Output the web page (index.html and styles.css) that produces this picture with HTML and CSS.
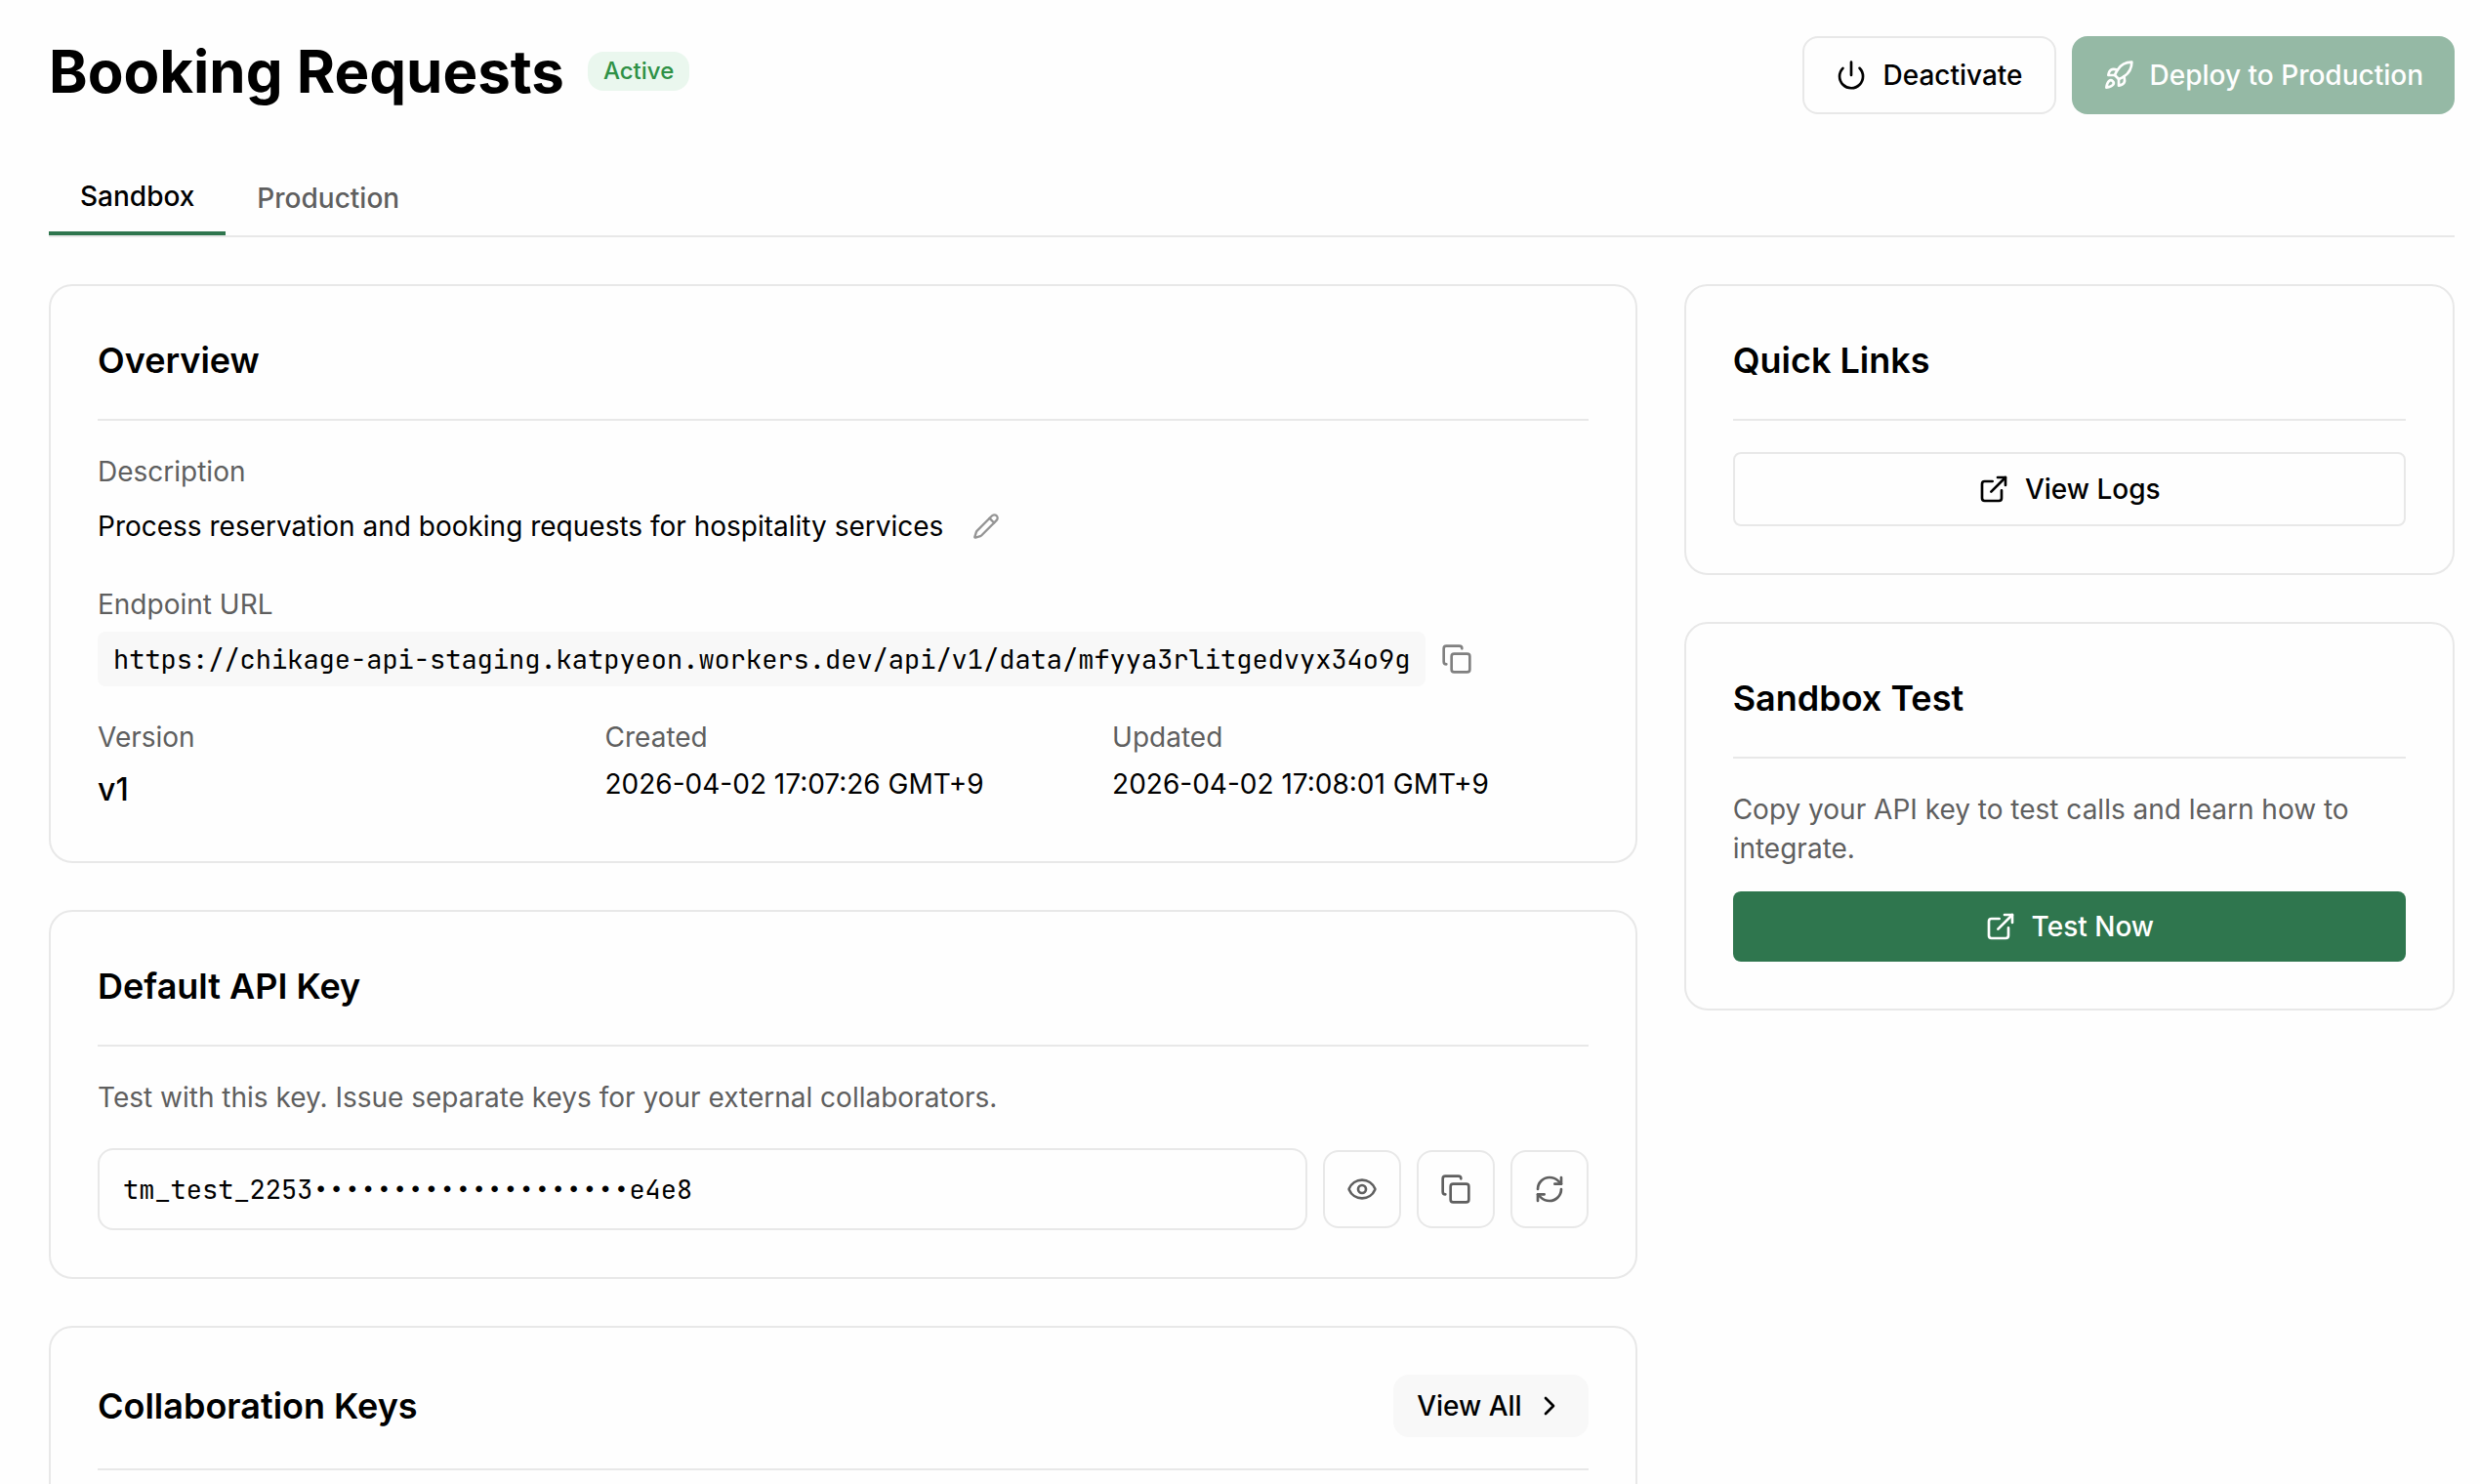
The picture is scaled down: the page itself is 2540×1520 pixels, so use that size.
FILE: index.html
```
<!DOCTYPE html>
<html lang="en">
<head>
    <meta charset="UTF-8">
    <meta name="viewport" content="width=device-width, initial-scale=1.0">
    <title>Booking Requests</title>
    <link rel="stylesheet" href="styles.css">
</head>
<body>
    <div class="page">
        <header class="page-header">
            <div class="page-title">
                <h1>Booking Requests</h1>
                <span class="badge">Active</span>
            </div>
            <div class="header-actions">
                <button type="button" class="btn btn-outline">
                    <svg class="icon" viewBox="0 0 24 24"><path d="M12 2v10"/><path d="M18.4 6.6a9 9 0 1 1-12.77.04"/></svg>
                    Deactivate
                </button>
                <button type="button" class="btn btn-primary" disabled>
                    <svg class="icon" viewBox="0 0 24 24"><path d="M4.5 16.5c-1.5 1.26-2 5-2 5s3.74-.5 5-2c.71-.84.7-2.13-.09-2.91a2.18 2.18 0 0 0-2.91-.09z"/><path d="m12 15-3-3a22 22 0 0 1 2-3.95A12.88 12.88 0 0 1 22 2c0 2.72-.78 7.5-6 11a22.35 22.35 0 0 1-4 2z"/><path d="M9 12H4s.55-3.03 2-4c1.62-1.08 5 0 5 0"/><path d="M12 15v5s3.03-.55 4-2c1.08-1.62 0-5 0-5"/></svg>
                    Deploy to Production
                </button>
            </div>
        </header>

        <nav class="tabs">
            <button type="button" class="tab active">Sandbox</button>
            <button type="button" class="tab">Production</button>
        </nav>

        <div class="content">
            <main class="main-column">
                <!-- Overview -->
                <section class="card">
                    <div class="card-header">
                        <h2>Overview</h2>
                    </div>
                    <div class="overview">
                        <div class="field">
                            <p class="label">Description</p>
                            <div class="field-row">
                                <p class="value">Process reservation and booking requests for hospitality services</p>
                                <button type="button" class="edit-btn" aria-label="Edit description">
                                    <svg class="icon icon-small" viewBox="0 0 24 24"><path d="M21.174 6.812a1 1 0 0 0-3.986-3.987L3.842 16.174a2 2 0 0 0-.5.83l-1.321 4.352a.5.5 0 0 0 .623.622l4.353-1.32a2 2 0 0 0 .83-.497z"/><path d="m15 5 4 4"/></svg>
                                </button>
                            </div>
                        </div>
                        <div class="field">
                            <p class="label">Endpoint URL</p>
                            <div class="field-row">
                                <code class="endpoint">https://chikage-api-staging.katpyeon.workers.dev/api/v1/data/mfyya3rlitgedvyx34o9g</code>
                                <button type="button" class="copy-btn" aria-label="Copy endpoint URL">
                                    <svg class="icon" viewBox="0 0 24 24"><rect x="8" y="8" width="14" height="14" rx="2"/><path d="M4 16c-1.1 0-2-.9-2-2V4c0-1.1.9-2 2-2h10c1.1 0 2 .9 2 2"/></svg>
                                </button>
                            </div>
                        </div>
                        <div class="meta-grid">
                            <div class="field">
                                <p class="label">Version</p>
                                <p class="version">v1</p>
                            </div>
                            <div class="field">
                                <p class="label">Created</p>
                                <p class="value">2026-04-02 17:07:26 GMT+9</p>
                            </div>
                            <div class="field">
                                <p class="label">Updated</p>
                                <p class="value">2026-04-02 17:08:01 GMT+9</p>
                            </div>
                        </div>
                    </div>
                </section>

                <!-- Default API key -->
                <section class="card">
                    <div class="card-header">
                        <h2 id="apiKeyTitle">Default API Key</h2>
                    </div>
                    <p class="label">Test with this key. Issue separate keys for your external collaborators.</p>
                    <div class="key-row">
                        <input type="text" class="key-input" value="tm_test_2253••••••••••••••••••••e4e8" aria-labelledby="apiKeyTitle" readonly>
                        <button type="button" class="icon-btn" aria-label="Show key">
                            <svg class="icon" viewBox="0 0 24 24"><path d="M2.062 12.348a1 1 0 0 1 0-.696 10.75 10.75 0 0 1 19.876 0 1 1 0 0 1 0 .696 10.75 10.75 0 0 1-19.876 0"/><circle cx="12" cy="12" r="3"/></svg>
                        </button>
                        <button type="button" class="icon-btn" aria-label="Copy key">
                            <svg class="icon" viewBox="0 0 24 24"><rect x="8" y="8" width="14" height="14" rx="2"/><path d="M4 16c-1.1 0-2-.9-2-2V4c0-1.1.9-2 2-2h10c1.1 0 2 .9 2 2"/></svg>
                        </button>
                        <button type="button" class="icon-btn" aria-label="Regenerate key">
                            <svg class="icon" viewBox="0 0 24 24"><path d="M3 12a9 9 0 0 1 9-9 9.75 9.75 0 0 1 6.74 2.74L21 8"/><path d="M21 3v5h-5"/><path d="M21 12a9 9 0 0 1-9 9 9.75 9.75 0 0 1-6.74-2.74L3 16"/><path d="M8 16H3v5"/></svg>
                        </button>
                    </div>
                </section>

                <!-- Collaboration keys -->
                <section class="card">
                    <div class="card-header">
                        <h2>Collaboration Keys</h2>
                        <a href="#" class="view-all">
                            View All
                            <svg class="icon" viewBox="0 0 24 24"><path d="m9 18 6-6-6-6"/></svg>
                        </a>
                    </div>
                    <div class="key-list"></div>
                </section>
            </main>

            <aside class="side-column">
                <section class="card">
                    <div class="card-header">
                        <h2>Quick Links</h2>
                    </div>
                    <a href="#" class="link-btn link-btn-outline">
                        <svg class="icon" viewBox="0 0 24 24"><path d="M15 3h6v6"/><path d="M10 14 21 3"/><path d="M18 13v6a2 2 0 0 1-2 2H5a2 2 0 0 1-2-2V8a2 2 0 0 1 2-2h6"/></svg>
                        View Logs
                    </a>
                </section>

                <section class="card">
                    <div class="card-header">
                        <h2>Sandbox Test</h2>
                    </div>
                    <p class="label test-text">Copy your API key to test calls and learn how to integrate.</p>
                    <a href="#" class="link-btn link-btn-primary">
                        <svg class="icon" viewBox="0 0 24 24"><path d="M15 3h6v6"/><path d="M10 14 21 3"/><path d="M18 13v6a2 2 0 0 1-2 2H5a2 2 0 0 1-2-2V8a2 2 0 0 1 2-2h6"/></svg>
                        Test Now
                    </a>
                </section>
            </aside>
        </div>
    </div>
</body>
</html>
```
FILE: styles.css
```
* {
    margin: 0;
    padding: 0;
    box-sizing: border-box;
}

body {
    background-color: #fefefe;
    color: #000000;
    font-family: 'Inter', 'Liberation Sans', sans-serif;
    font-size: 28px;
    line-height: 40px;
}

button, input {
    font: inherit;
    color: inherit;
}

button {
    cursor: pointer;
    background: none;
    border: none;
}

a {
    color: inherit;
    text-decoration: none;
}

.page {
    padding: 37px 26px 48px 50px;
}

.icon {
    width: 32px;
    height: 32px;
    flex-shrink: 0;
    fill: none;
    stroke: currentColor;
    stroke-width: 2;
    stroke-linecap: round;
    stroke-linejoin: round;
}

.icon-small {
    width: 28px;
    height: 28px;
}

/* Header */
.page-header {
    display: flex;
    justify-content: space-between;
    align-items: center;
    margin-bottom: 48px;
}

.page-title {
    display: flex;
    align-items: center;
    gap: 24px;
    height: 72px;
    align-self: flex-start;
}

.page-title h1 {
    font-size: 60px;
    line-height: 72px;
    font-weight: 700;
}

.badge {
    padding: 0 16px;
    border-radius: 16px;
    background-color: #eaf7ee;
    color: #2f9146;
    font-size: 24px;
    font-weight: 500;
}

.header-actions {
    display: flex;
    gap: 16px;
}

.btn {
    display: flex;
    align-items: center;
    gap: 16px;
    height: 80px;
    padding: 0 32px;
    border-radius: 16px;
    font-weight: 500;
}

.btn-outline {
    border: 2px solid #e8e8e8;
}

.btn-primary {
    background-color: #2f764e;
    color: #ffffff;
}

.btn:disabled {
    opacity: 0.5;
    cursor: not-allowed;
}

/* Tabs */
.tabs {
    display: flex;
    border-bottom: 2px solid #e8e8e8;
    margin-bottom: 48px;
}

.tab {
    padding: 16px 32px;
    color: #5f5f5f;
    font-weight: 500;
}

.tab.active {
    color: #000000;
    border-bottom: 4px solid #2f764e;
}

/* Layout */
.content {
    display: grid;
    grid-template-columns: repeat(3, 1fr);
    gap: 48px;
    align-items: start;
}

.main-column {
    grid-column: span 2;
}

.main-column, .side-column {
    display: flex;
    flex-direction: column;
    gap: 48px;
    min-width: 0;
}

.card {
    padding: 48px;
    border: 2px solid #e8e8e8;
    border-radius: 24px;
}

.card-header {
    display: flex;
    justify-content: space-between;
    align-items: center;
    padding-bottom: 32px;
    margin-bottom: 32px;
    border-bottom: 2px solid #e8e8e8;
}

.card-header h2 {
    font-size: 36px;
    line-height: 56px;
    font-weight: 600;
}

.label {
    color: #5f5f5f;
}

/* Overview */
.overview {
    display: flex;
    flex-direction: column;
    gap: 32px;
}

.field {
    display: flex;
    flex-direction: column;
    gap: 8px;
}

.field-row {
    display: flex;
    align-items: center;
    gap: 16px;
}

.edit-btn {
    display: flex;
    padding: 14px;
    color: #949494;
}

.endpoint {
    padding: 8px 16px;
    border-radius: 8px;
    background-color: #f8f8f8;
}

.endpoint, .key-input {
    font-family: 'JetBrains Mono', 'DejaVu Sans Mono', monospace;
    font-size: 27px;
    font-variant-ligatures: none;
}

.copy-btn {
    display: flex;
    color: #808080;
}

.meta-grid {
    display: grid;
    grid-template-columns: repeat(3, 1fr);
    gap: 32px;
}

.version {
    font-size: 32px;
    line-height: 51px;
    font-weight: 500;
}

/* API key */
.key-row {
    display: flex;
    align-items: center;
    gap: 16px;
    margin-top: 32px;
}

.key-input {
    flex: 1;
    min-width: 0;
    height: 84px;
    padding: 0 24px;
    border: 2px solid #e8e8e8;
    border-radius: 16px;
    background: none;
}

.icon-btn {
    display: flex;
    align-items: center;
    justify-content: center;
    width: 80px;
    height: 80px;
    border: 2px solid #e8e8e8;
    border-radius: 16px;
    color: #5f5f5f;
}

.view-all {
    display: flex;
    align-items: center;
    gap: 12px;
    padding: 12px 24px;
    border-radius: 16px;
    background-color: #f8f8f8;
    font-weight: 500;
}

.key-list {
    min-height: 160px;
}

/* Sidebar */
.link-btn {
    display: flex;
    align-items: center;
    justify-content: center;
    gap: 16px;
    padding: 16px;
    border-radius: 8px;
    font-weight: 500;
}

.link-btn-outline {
    border: 2px solid #e8e8e8;
}

.link-btn-primary {
    background-color: #2f764e;
    color: #ffffff;
}

.test-text {
    margin-bottom: 24px;
}
```
